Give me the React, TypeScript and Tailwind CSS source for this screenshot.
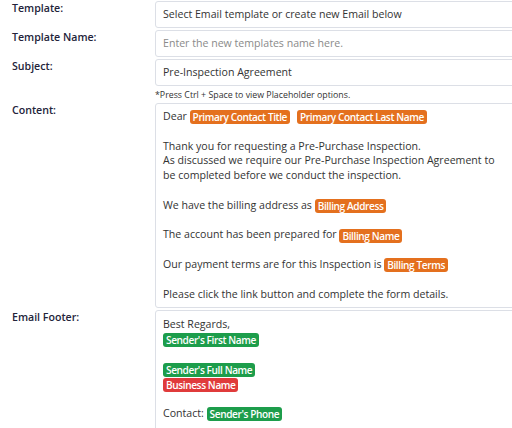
import React from "react";

type Tone = "orange" | "green" | "red";

const toneClass: Record<Tone, string> = {
  orange: "bg-[#e4701e]",
  green: "bg-[#1d9d4b]",
  red: "bg-[#e03b3b]",
};

function Tag({ tone, children }: { tone: Tone; children: React.ReactNode }) {
  return (
    <span
      className={`${toneClass[tone]} inline-block h-[14px] rounded-[3px] px-[3px] align-middle text-[10.1px] font-semibold leading-[14px] tracking-[-0.4px] text-white`}
    >
      {children}
    </span>
  );
}

function Label({ children }: { children: React.ReactNode }) {
  return (
    <div className="pl-3 text-[10.6px] font-semibold leading-[15px] text-[#23233a]">{children}</div>
  );
}

function Line({ children }: { children?: React.ReactNode }) {
  return <div className="h-[14.8px] whitespace-nowrap leading-[14.8px]">{children}</div>;
}

function Field({ children, muted }: { children: React.ReactNode; muted?: boolean }) {
  return (
    <div
      className={`flex h-[27px] items-center rounded-[3px] border border-[#dcdfe6] bg-white px-[7px] text-[10.6px] ${
        muted ? "text-[#8a8a8a]" : "text-[#333]"
      }`}
    >
      {children}
    </div>
  );
}

export default function App() {
  return (
    <div
      className="h-[428px] w-[512px] overflow-hidden bg-white text-[#333]"
      style={{ fontFamily: '"Open Sans", "Noto Sans", sans-serif' }}
    >
      <div className="grid w-[540px] grid-cols-[155px_1fr] gap-y-[2px] pt-px">
        <Label>Template:</Label>
        <Field>Select Email template or create new Email below</Field>

        <Label>Template Name:</Label>
        <Field muted>Enter the new templates name here.</Field>

        <Label>Subject:</Label>
        <Field>Pre-Inspection Agreement</Field>

        <div />
        <div className="h-[13px] pt-px text-[8.8px] leading-[12px] text-[#333]">
          *Press Ctrl + Space to view Placeholder options.
        </div>

        <Label>Content:</Label>
        <div className="rounded-[3px] border border-[#dcdfe6] px-[7px] pb-[6px] pt-[5px] text-[10.6px] text-[#333]">
          <Line>
            Dear <Tag tone="orange">Primary Contact Title</Tag>
            <span className="ml-[7px]">
              <Tag tone="orange">Primary Contact Last Name</Tag>
            </span>
          </Line>
          <Line />
          <Line>Thank you for requesting a Pre-Purchase Inspection.</Line>
          <Line>As discussed we require our Pre-Purchase Inspection Agreement to</Line>
          <Line>be completed before we conduct the inspection.</Line>
          <Line />
          <Line>
            We have the billing address as <Tag tone="orange">Billing Address</Tag>
          </Line>
          <Line />
          <Line>
            The account has been prepared for <Tag tone="orange">Billing Name</Tag>
          </Line>
          <Line />
          <Line>
            Our payment terms are for this Inspection is <Tag tone="orange">Billing Terms</Tag>
          </Line>
          <Line />
          <Line>Please click the link button and complete the form details.</Line>
        </div>

        <Label>Email Footer:</Label>
        <div className="h-[140px] rounded-[3px] border border-[#dcdfe6] px-[7px] pt-[6px] text-[10.6px] text-[#333]">
          <Line>Best Regards,</Line>
          <Line>
            <Tag tone="green">Sender's First Name</Tag>
          </Line>
          <Line />
          <Line>
            <Tag tone="green">Sender's Full Name</Tag>
          </Line>
          <Line>
            <Tag tone="red">Business Name</Tag>
          </Line>
          <Line />
          <Line>
            Contact: <Tag tone="green">Sender's Phone</Tag>
          </Line>
        </div>
      </div>
    </div>
  );
}
